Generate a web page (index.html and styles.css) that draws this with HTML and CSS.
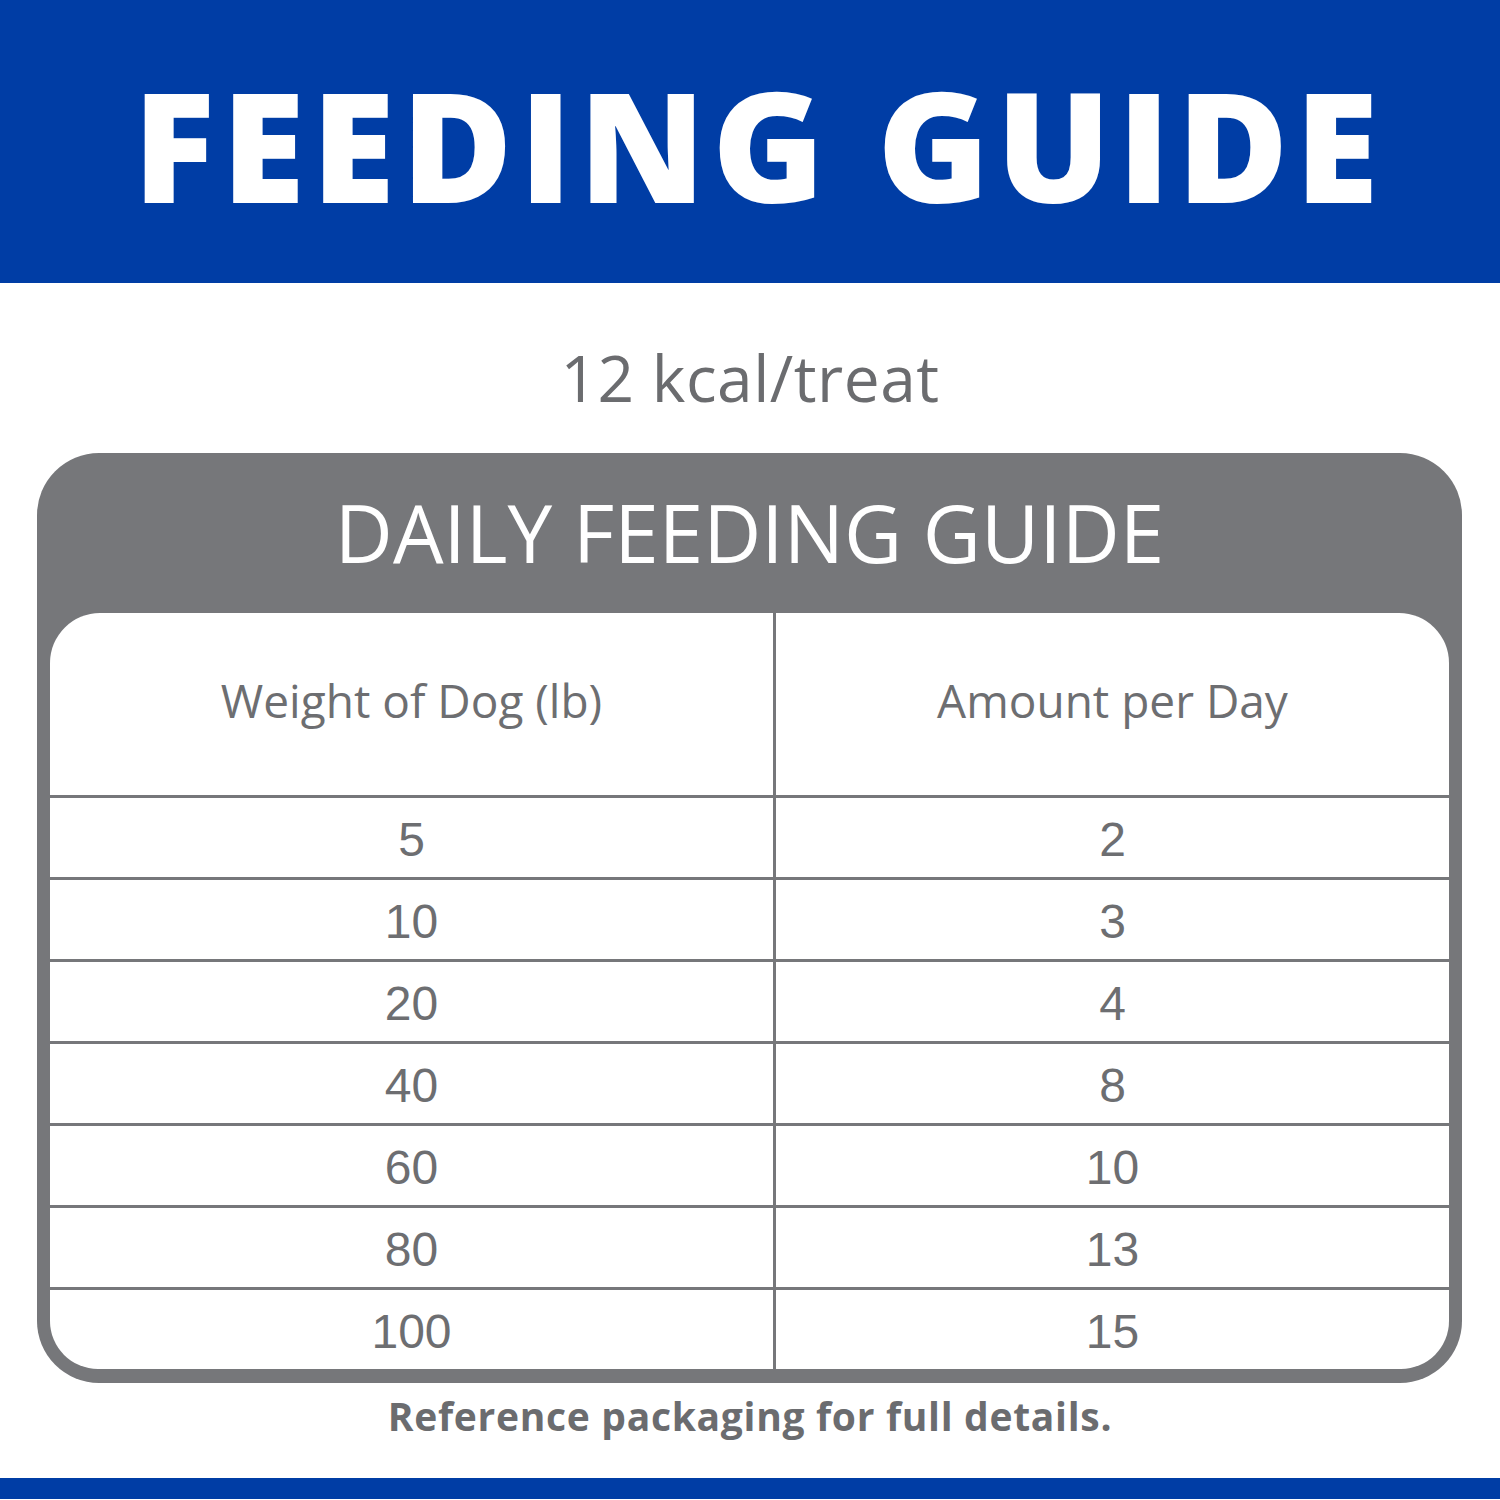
FILE: index.html
```html
<!DOCTYPE html>
<html>
<head>
<meta charset="utf-8">
<link rel="stylesheet" href="styles.css">
</head>
<body>
<div class="page">
  <header class="banner"><h1 class="banner-title">FEEDING GUIDE</h1></header>
  <div class="kcal">12 kcal/treat</div>
  <section class="card">
    <h2 class="card-title">DAILY FEEDING GUIDE</h2>
    <div class="table">
      <div class="cell head">Weight of Dog (lb)</div>
      <div class="cell head right">Amount per Day</div>
      <div class="cell row">5</div><div class="cell row right">2</div>
      <div class="cell row">10</div><div class="cell row right">3</div>
      <div class="cell row">20</div><div class="cell row right">4</div>
      <div class="cell row">40</div><div class="cell row right">8</div>
      <div class="cell row">60</div><div class="cell row right">10</div>
      <div class="cell row">80</div><div class="cell row right">13</div>
      <div class="cell row">100</div><div class="cell row right">15</div>
    </div>
  </section>
  <p class="note">Reference packaging for full details.</p>
  <div class="bottom-band"></div>
</div>
</body>
</html>
```
FILE: styles.css
```css
html, body { margin: 0; padding: 0; background: #fff; }
.page { width: 1500px; height: 1500px; display: flex; flex-direction: column; overflow: hidden; }
.banner { height: 283px; background: #003da5; display: flex; align-items: center; justify-content: center; flex: none; }
.banner-title { margin: 0; color: #fff; font-family: "Open Sans", sans-serif; font-weight: 800; font-size: 152px; line-height: 1; letter-spacing: 6.5px; padding-top: 6px; padding-left: 18px; }
.kcal { height: 170px; display: flex; align-items: center; justify-content: center; font-family: "Open Sans", sans-serif; font-size: 64px; letter-spacing: 0.5px; color: #6b6c6f; padding-top: 18px; box-sizing: border-box; flex: none; }
.card { margin: 0 38px 0 37px; background: #76777a; border-radius: 62px; padding: 0 13px 14px; flex: none; }
.card-title { margin: 0; height: 160px; display: flex; align-items: center; justify-content: center; color: #fff; font-family: "Open Sans", sans-serif; font-weight: 400; font-size: 80px; line-height: 1; padding-bottom: 2px; box-sizing: border-box; }
.table { background: #fff; border-radius: 50px 50px 48px 48px; display: grid; grid-template-columns: 723px 676px; grid-template-rows: 182px repeat(7, 82px); overflow: hidden; }
.cell { display: flex; align-items: center; justify-content: center; color: #6d6e71; box-sizing: border-box; }
.cell.right { border-left: 3px solid #76777a; }
.head { font-family: "Open Sans", sans-serif; font-size: 46px; padding-bottom: 8px; }
.row { border-top: 3px solid #76777a; font-family: "Liberation Sans", Arial, sans-serif; font-size: 48px; padding-top: 4px; }
.note { margin: 0; height: 95px; display: flex; align-items: center; justify-content: center; font-family: "Open Sans", sans-serif; font-weight: 700; font-size: 39px; letter-spacing: 0.7px; color: #6b6c6f; padding-bottom: 30px; box-sizing: border-box; flex: none; }
.bottom-band { height: 21px; background: #003da5; flex: none; }
```
